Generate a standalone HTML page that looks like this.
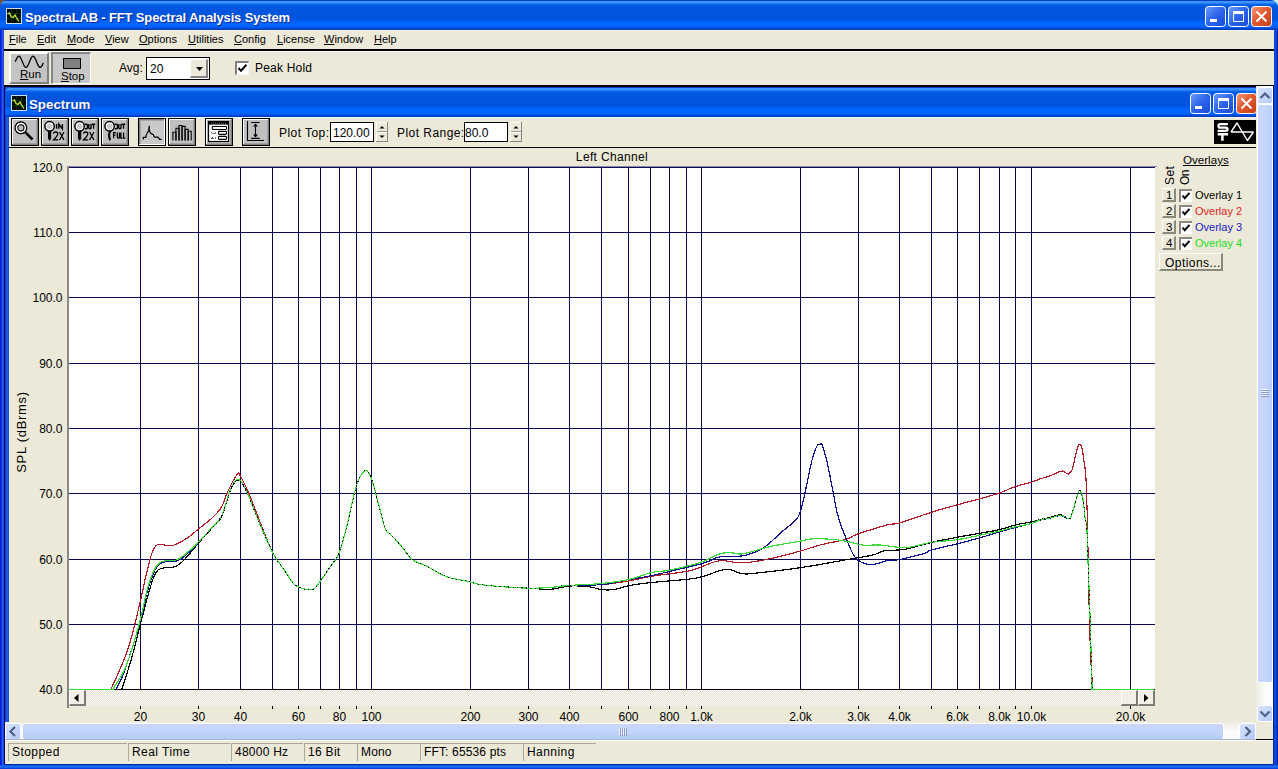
<!DOCTYPE html>
<html><head><meta charset="utf-8"><style>
*{margin:0;padding:0;box-sizing:border-box}
body{-webkit-font-smoothing:antialiased;width:1278px;height:769px;overflow:hidden;position:relative;background:#ECE9D8;font-family:"Liberation Sans",sans-serif;font-size:12px;color:#000}
.a{position:absolute}
.t{position:absolute;white-space:pre;line-height:1;letter-spacing:0.45px}
.tb{background:linear-gradient(to bottom,#0a3fc4 0,#0a3fc4 1px,#3c95ff 1px,#3893ff 3px,#0b67ec 4px,#0258e2 6px,#0055de 12px,#0053dc 18px,#0059ea 20px,#0064fc 22px,#0066ff 26px,#0055e6 28px,#003ec0 29px,#003ec0 30px)}
.u{text-decoration:underline}
.m{font-size:11px;top:34px;letter-spacing:0}
.sb{background:linear-gradient(to right,#cbd9fd,#b9ccfa)}
.btn{position:absolute;width:28px;height:28px;border:1px solid #000;background:#c0c0c0;box-shadow:inset 1px 1px 0 #fff,inset -1px -1px 0 #808080}
.btn.p{background:#c8c8c8;box-shadow:inset 1px 1px 0 #808080,inset -1px -1px 0 #fff}
.spin{position:absolute;width:12px;height:20px;background:#ECE9D8;border-left:1px solid #fff;border-top:1px solid #fff;border-right:1px solid #808080;border-bottom:1px solid #808080}
.pane{position:absolute;top:743px;height:18px;border-left:1px solid #aca899;border-top:1px solid #aca899}
</style></head><body>

<!-- outer frame -->
<div class="a" style="left:0;top:0;width:8px;height:8px;background:#6a5040"></div><div class="a" style="left:1270px;top:0;width:8px;height:8px;background:#d4f2f0"></div>
<div class="a" style="left:0;top:29px;width:4px;height:740px;background:linear-gradient(to right,#0018d8,#0a28dc 30%,#2a5ef0 60%,#1a40c0)"></div>
<div class="a" style="left:1274px;top:29px;width:4px;height:740px;background:linear-gradient(to right,#0b4ad8,#0d46d4 50%,#0020a0)"></div>
<div class="a" style="left:1275px;top:6px;width:3px;height:23px;background:linear-gradient(to right,rgba(0,40,180,0.3),#0020a0)"></div>
<div class="a" style="left:0;top:765px;width:1278px;height:4px;background:linear-gradient(to bottom,#0b55e0,#1e6ff5 50%,#0831d9)"></div>
<div class="a" style="left:4px;top:764px;width:1270px;height:1px;background:#002a9c"></div>
<div class="a" style="left:4px;top:86px;width:1px;height:678px;background:#000070"></div>
<div class="a" style="left:1273px;top:86px;width:1px;height:678px;background:#00229a"></div>

<!-- main title bar -->
<div class="a tb" style="left:0;top:0;width:1278px;height:30px;border-radius:7px 7px 0 0"></div>
<div class="a" style="left:4px;top:30px;width:1270px;height:1px;background:#f2f6ff"></div>
<svg class="a" style="left:6px;top:8px" width="16" height="16" viewBox="0 0 16 16">
<rect x="0.5" y="0.5" width="15" height="15" fill="#050a05" stroke="#c8dcf4"/>
<path d="M1,5.5H15M1,10.5H15M5.5,1V15M10.5,1V15" stroke="#083010" stroke-width="1"/>
<path d="M1.5,6 L3.5,5 L5,8.5 L7,9.5 L9,7 L10,9 L13,13.5" fill="none" stroke="#c8e838" stroke-width="1.3"/>
</svg>
<div class="t" style="left:25px;top:11px;color:#fff;text-shadow:1px 1px 0 #0a2a9a;font-weight:bold;font-size:13px;letter-spacing:-0.15px">SpectraLAB - FFT Spectral Analysis System</div>
<svg class="a" style="left:1205px;top:6px" width="67" height="21" viewBox="0 0 67 21"><defs><linearGradient id="bg1205" x1="0" y1="0" x2="1" y2="1"><stop offset="0" stop-color="#6f9df9"/><stop offset="0.5" stop-color="#2c64ec"/><stop offset="1" stop-color="#1a4bd8"/></linearGradient>
<linearGradient id="rg1205" x1="0" y1="0" x2="1" y2="1"><stop offset="0" stop-color="#f0a07e"/><stop offset="0.45" stop-color="#e35a30"/><stop offset="1" stop-color="#c23d18"/></linearGradient></defs>
<rect x="0.5" y="0.5" width="20" height="20" rx="3" fill="url(#bg1205)" stroke="#fff"/>
<rect x="5" y="13" width="7" height="3" fill="#fff"/>
<rect x="23.5" y="0.5" width="20" height="20" rx="3" fill="url(#bg1205)" stroke="#fff"/>
<path d="M28.5,6.5H38.5V15.5H28.5Z" fill="none" stroke="#fff"/><rect x="28" y="5" width="11" height="3" fill="#fff"/>
<rect x="46.5" y="0.5" width="20" height="20" rx="3" fill="url(#rg1205)" stroke="#fff"/>
<path d="M51.5,5.5L61.5,15.5M61.5,5.5L51.5,15.5" stroke="#fff" stroke-width="2"/>
</svg>

<!-- menu bar -->
<div class="a" style="left:4px;top:49px;width:1270px;height:2px;background:#000"></div>
<div class="t m" style="left:9px"><span class="u">F</span>ile</div>
<div class="t m" style="left:37px"><span class="u">E</span>dit</div>
<div class="t m" style="left:67px"><span class="u">M</span>ode</div>
<div class="t m" style="left:105px"><span class="u">V</span>iew</div>
<div class="t m" style="left:139px"><span class="u">O</span>ptions</div>
<div class="t m" style="left:188px"><span class="u">U</span>tilities</div>
<div class="t m" style="left:234px"><span class="u">C</span>onfig</div>
<div class="t m" style="left:277px"><span class="u">L</span>icense</div>
<div class="t m" style="left:324px"><span class="u">W</span>indow</div>
<div class="t m" style="left:374px"><span class="u">H</span>elp</div>

<!-- main toolbar -->
<div class="a" style="left:5px;top:51px;width:1268px;height:1px;background:#fff"></div>
<div class="a" style="left:4px;top:85px;width:1270px;height:2px;background:#000"></div>
<!-- Run -->
<div class="a" style="left:9px;top:52px;width:40px;height:32px;background:#c4c4c4;border-left:2px solid #fff;border-top:2px solid #fff;border-right:2px solid #7f7f7f;border-bottom:2px solid #7f7f7f"></div>
<svg class="a" style="left:14px;top:55px" width="31" height="14" viewBox="0 0 31 14"><path d="M1.3,6.8 L2.0,5.1 L2.7,3.5 L3.4,2.3 L4.1,1.5 L4.8,1.2 L5.5,1.4 L6.2,2.2 L6.9,3.4 L7.6,4.9 L8.3,6.6 L9.0,8.3 L9.7,9.8 L10.4,11.1 L11.1,12.0 L11.8,12.4 L12.5,12.2 L13.2,11.6 L13.9,10.4 L14.6,9.0 L15.3,7.3 L16.0,5.6 L16.7,4.0 L17.4,2.6 L18.1,1.7 L18.8,1.2 L19.5,1.3 L20.2,1.9 L20.9,3.0 L21.6,4.4 L22.3,6.1 L23.0,7.8 L23.7,9.4 L24.4,10.8 L25.1,11.8 L25.8,12.3 L26.5,12.3 L27.2,11.8 L27.9,10.8 L28.6,9.4 L29.3,7.8" fill="none" stroke="#000" stroke-width="1.3"/></svg>
<div class="t" style="left:20px;top:69px;font-size:11.5px;letter-spacing:0"><span class="u">R</span>un</div>
<!-- Stop -->
<div class="a" style="left:51px;top:52px;width:40px;height:32px;background:#c8c8c8;border-left:2px solid #888;border-top:2px solid #888;border-right:1px solid #fff;border-bottom:1px solid #fff"></div>
<div class="a" style="left:63px;top:58px;width:18px;height:11px;background:#808080;border:1px solid #000"></div>
<div class="t" style="left:61px;top:71px;font-size:11.5px;letter-spacing:0"><span class="u">S</span>top</div>
<!-- Avg -->
<div class="t" style="left:119px;top:62px;letter-spacing:0">Avg:</div>
<div class="a" style="left:146px;top:57px;width:64px;height:23px;background:#fff;border:1px solid #000"></div>
<div class="t" style="left:150px;top:63px;letter-spacing:0">20</div>
<div class="a" style="left:190px;top:59px;width:18px;height:19px;background:#ECE9D8;border-left:1px solid #fff;border-top:1px solid #fff;border-right:2px solid #858585;border-bottom:2px solid #858585"></div>
<svg class="a" style="left:196px;top:67px" width="7" height="4"><path d="M0,0H7L3.5,4Z" fill="#000"/></svg>
<!-- Peak hold checkbox -->
<div class="a" style="left:235px;top:61px;width:14px;height:14px;background:#fff;border-left:2px solid #808080;border-top:2px solid #808080;border-right:1px solid #f4f4f4;border-bottom:1px solid #f4f4f4"></div>
<svg class="a" style="left:238px;top:64px" width="9" height="9" viewBox="0 0 9 9"><path d="M0.5,4 L3,6.8 L8.5,0.8" fill="none" stroke="#000" stroke-width="2"/></svg>
<div class="t" style="left:255px;top:62px;letter-spacing:0.2px">Peak Hold</div>

<!-- MDI child -->
<div class="a" style="left:5px;top:87px;width:4px;height:635px;background:linear-gradient(to right,#0030b0,#1e5ae8 40%,#1e5ae8 70%,#1848a8)"></div>
<div class="a" style="left:9px;top:118px;width:1px;height:604px;background:#e4f0ff"></div>
<div class="a tb" style="left:5px;top:87px;width:1251px;height:30px;border-radius:6px 0 0 0"></div>
<div class="a" style="left:9px;top:117px;width:1247px;height:1px;background:#f2f6ff"></div>
<svg class="a" style="left:11px;top:95px" width="16" height="16" viewBox="0 0 16 16">
<rect x="0.5" y="0.5" width="15" height="15" fill="#050a05" stroke="#c8dcf4"/>
<path d="M1,5.5H15M1,10.5H15M5.5,1V15M10.5,1V15" stroke="#083010" stroke-width="1"/>
<path d="M1.5,6 L3.5,5 L5,8.5 L7,9.5 L9,7 L10,9 L13,13.5" fill="none" stroke="#c8e838" stroke-width="1.3"/>
</svg>
<div class="t" style="left:29px;top:98px;color:#fff;text-shadow:1px 1px 0 #0a2a9a;font-weight:bold;font-size:13.3px;letter-spacing:0">Spectrum</div>
<svg class="a" style="left:1190px;top:93px" width="67" height="21" viewBox="0 0 67 21"><defs><linearGradient id="bg1190" x1="0" y1="0" x2="1" y2="1"><stop offset="0" stop-color="#6f9df9"/><stop offset="0.5" stop-color="#2c64ec"/><stop offset="1" stop-color="#1a4bd8"/></linearGradient>
<linearGradient id="rg1190" x1="0" y1="0" x2="1" y2="1"><stop offset="0" stop-color="#f0a07e"/><stop offset="0.45" stop-color="#e35a30"/><stop offset="1" stop-color="#c23d18"/></linearGradient></defs>
<rect x="0.5" y="0.5" width="20" height="20" rx="3" fill="url(#bg1190)" stroke="#fff"/>
<rect x="5" y="13" width="7" height="3" fill="#fff"/>
<rect x="23.5" y="0.5" width="20" height="20" rx="3" fill="url(#bg1190)" stroke="#fff"/>
<path d="M28.5,6.5H38.5V15.5H28.5Z" fill="none" stroke="#fff"/><rect x="28" y="5" width="11" height="3" fill="#fff"/>
<rect x="46.5" y="0.5" width="20" height="20" rx="3" fill="url(#rg1190)" stroke="#fff"/>
<path d="M51.5,5.5L61.5,15.5M61.5,5.5L51.5,15.5" stroke="#fff" stroke-width="2"/>
</svg>
<div class="a" style="left:9px;top:147px;width:1247px;height:1px;background:#000"></div>

<svg class="a" style="left:11px;top:118px" width="28" height="28" viewBox="0 0 28 28"><rect x="0" y="0" width="28" height="28" fill="#000"/><rect x="1" y="1" width="26" height="26" fill="#c0c0c0"/><path d="M1,1H27V2H2V27H1Z" fill="#ffffff"/><path d="M27,1V27H1V26H26V1Z" fill="#808080"/><path d="M26,2V26H2V25H25V2Z" fill="#a0a0a0"/><circle cx="9.9" cy="9.8" r="5.8" fill="#c0c0c0" stroke="#000" stroke-width="1.4"/><circle cx="9.9" cy="9.8" r="4.3" fill="none" stroke="#fff" stroke-width="1.6"/><circle cx="9.9" cy="9.8" r="3.0999999999999996" fill="none" stroke="#000" stroke-width="1.1"/><path d="M14.2,14.2L21.5,21.5" stroke="#000" stroke-width="2.6"/></svg>
<svg class="a" style="left:41px;top:118px" width="28" height="28" viewBox="0 0 28 28"><rect x="0" y="0" width="28" height="28" fill="#000"/><rect x="1" y="1" width="26" height="26" fill="#c0c0c0"/><path d="M1,1H27V2H2V27H1Z" fill="#ffffff"/><path d="M27,1V27H1V26H26V1Z" fill="#808080"/><path d="M26,2V26H2V25H25V2Z" fill="#a0a0a0"/><circle cx="8.6" cy="8.3" r="4.7" fill="#fff" stroke="#000" stroke-width="1.5"/><circle cx="8.6" cy="8.3" r="2.9000000000000004" fill="#c8c8c8"/><path d="M7,13H10.2V20.5L8.6,23L7,20.5Z" fill="#000"/><path d="M15.6,6V10.8M17.8,10.8V6L21.4,10.8V6" fill="none" stroke="#000" stroke-width="1.4"/><path d="M12.3,15.6Q12.8,14 14.8,14Q16.8,14 16.8,16Q16.8,17.6 12.6,21.8H17.3M18.6,14L23,22M23,14L18.6,22" fill="none" stroke="#000" stroke-width="1.3"/></svg>
<svg class="a" style="left:71px;top:118px" width="28" height="28" viewBox="0 0 28 28"><rect x="0" y="0" width="28" height="28" fill="#000"/><rect x="1" y="1" width="26" height="26" fill="#c0c0c0"/><path d="M1,1H27V2H2V27H1Z" fill="#ffffff"/><path d="M27,1V27H1V26H26V1Z" fill="#808080"/><path d="M26,2V26H2V25H25V2Z" fill="#a0a0a0"/><circle cx="8.6" cy="8.3" r="4.7" fill="#fff" stroke="#000" stroke-width="1.5"/><circle cx="8.6" cy="8.3" r="2.9000000000000004" fill="#c8c8c8"/><path d="M7,13H10.2V20.5L8.6,23L7,20.5Z" fill="#000"/><path d="M13.8,6.3H15.2Q16.6,6.3 16.6,8.5Q16.6,10.7 15.2,10.7H13.8M17.8,6V9.8Q17.8,10.8 18.8,10.8Q20,10.8 20,9.8V6M20.8,6.3H24.3M22.55,6.3V10.8" fill="none" stroke="#000" stroke-width="1.4"/><path d="M12.3,15.6Q12.8,14 14.8,14Q16.8,14 16.8,16Q16.8,17.6 12.6,21.8H17.3M18.6,14L23,22M23,14L18.6,22" fill="none" stroke="#000" stroke-width="1.3"/></svg>
<svg class="a" style="left:101px;top:118px" width="28" height="28" viewBox="0 0 28 28"><rect x="0" y="0" width="28" height="28" fill="#000"/><rect x="1" y="1" width="26" height="26" fill="#c0c0c0"/><path d="M1,1H27V2H2V27H1Z" fill="#ffffff"/><path d="M27,1V27H1V26H26V1Z" fill="#808080"/><path d="M26,2V26H2V25H25V2Z" fill="#a0a0a0"/><circle cx="8.6" cy="8.3" r="4.7" fill="#fff" stroke="#000" stroke-width="1.5"/><circle cx="8.6" cy="8.3" r="2.9000000000000004" fill="#c8c8c8"/><path d="M8.2,13 Q6.3,16 7.2,19.5 L8.3,22.8 L10,21.8 L9.2,18.2 Q8.8,15.8 10.4,13Z" fill="#000"/><path d="M13.8,6.3H15.2Q16.6,6.3 16.6,8.5Q16.6,10.7 15.2,10.7H13.8M17.8,6V9.8Q17.8,10.8 18.8,10.8Q20,10.8 20,9.8V6M20.8,6.3H24.3M22.55,6.3V10.8" fill="none" stroke="#000" stroke-width="1.4"/><path d="M12.6,20.2V14.6H15M12.6,17.2H14.6M16.4,14.5V19.3Q16.4,20.2 17.4,20.2Q18.5,20.2 18.5,19.3V14.5M19.9,14.5V20.2H21.6M22.6,14.5V20.2H24.4" fill="none" stroke="#000" stroke-width="1.3"/></svg>
<svg class="a" style="left:138px;top:118px" width="28" height="28" viewBox="0 0 28 28"><rect x="0" y="0" width="28" height="28" fill="#000"/><rect x="1" y="1" width="26" height="26" fill="#c9c9c9"/><path d="M1,1H27V2H2V27H1Z" fill="#808080"/><path d="M27,1V27H1V26H26V1Z" fill="#ffffff"/><path d="M2,2H26V3H3V26H2Z" fill="#a8a8a8"/><path d="M5.3,21.5V19.4H8V17.8L9.4,14.5L10.6,13.1L11.3,7.8V12.6L12.7,15.4L15.3,16.8L16.4,19.2H20L21.6,21.3H23.5" fill="none" stroke="#000" stroke-width="1.2"/></svg>
<svg class="a" style="left:168px;top:118px" width="28" height="28" viewBox="0 0 28 28"><rect x="0" y="0" width="28" height="28" fill="#000"/><rect x="1" y="1" width="26" height="26" fill="#c0c0c0"/><path d="M1,1H27V2H2V27H1Z" fill="#ffffff"/><path d="M27,1V27H1V26H26V1Z" fill="#808080"/><path d="M26,2V26H2V25H25V2Z" fill="#a0a0a0"/><path d="M4.90,22.5V14.3H7.95V22.5" fill="none" stroke="#000" stroke-width="1.1"/><path d="M7.95,22.5V10.3H11.00V22.5" fill="none" stroke="#000" stroke-width="1.1"/><path d="M11.00,22.5V7.5H14.05V22.5" fill="none" stroke="#000" stroke-width="1.1"/><path d="M14.05,22.5V8.4H17.10V22.5" fill="none" stroke="#000" stroke-width="1.1"/><path d="M17.10,22.5V11.4H20.15V22.5" fill="none" stroke="#000" stroke-width="1.1"/><path d="M20.15,22.5V13.3H23.20V22.5" fill="none" stroke="#000" stroke-width="1.1"/></svg>
<svg class="a" style="left:205px;top:118px" width="28" height="28" viewBox="0 0 28 28"><rect x="0" y="0" width="28" height="28" fill="#000"/><rect x="1" y="1" width="26" height="26" fill="#c0c0c0"/><path d="M1,1H27V2H2V27H1Z" fill="#ffffff"/><path d="M27,1V27H1V26H26V1Z" fill="#808080"/><path d="M26,2V26H2V25H25V2Z" fill="#a0a0a0"/><rect x="3.5" y="3.5" width="20" height="20" fill="#fff" stroke="#000" stroke-width="1.2"/><rect x="4" y="4" width="19" height="2.6" fill="#000"/><path d="M6,5.3H21" stroke="#888" stroke-width="0.8" stroke-dasharray="1,1"/><rect x="7.3" y="8.5" width="14.2" height="3" rx="0.8" fill="#fff" stroke="#000" stroke-width="1.1"/><rect x="13.5" y="13.4" width="8" height="3" rx="0.8" fill="#fff" stroke="#000" stroke-width="1.1"/><rect x="13.5" y="18.4" width="8" height="3" rx="0.8" fill="#fff" stroke="#000" stroke-width="1.1"/><path d="M6.3,14.5L7.5,15.5M8.5,15.5H9.5M10.5,14.5V15.5M6.3,20.5L7.5,19.5L8.5,20.5M10.5,19.5V20.5" stroke="#000" stroke-width="1"/></svg>
<svg class="a" style="left:242px;top:118px" width="28" height="28" viewBox="0 0 28 28"><rect x="0" y="0" width="28" height="28" fill="#000"/><rect x="1" y="1" width="26" height="26" fill="#c0c0c0"/><path d="M1,1H27V2H2V27H1Z" fill="#ffffff"/><path d="M27,1V27H1V26H26V1Z" fill="#808080"/><path d="M26,2V26H2V25H25V2Z" fill="#a0a0a0"/><path d="M5.5,3V22.5H22" fill="none" stroke="#000" stroke-width="1.1"/><path d="M9.2,4.5H17.7M9.2,20.4H17.7M13.5,6V19" stroke="#000" stroke-width="1.1"/><path d="M11,8.5L13.5,5.5L16,8.5ZM11,16.5L13.5,19.5L16,16.5Z" fill="#000"/></svg>
<div class="t" style="left:279px;top:127px">Plot Top:</div>
<div class="a" style="left:330px;top:122px;width:44px;height:20px;background:#fff;border:1px solid #000"></div>
<div class="t" style="left:333px;top:127px;letter-spacing:0">120.00</div>
<svg class="a" style="left:376px;top:122px" width="12" height="20" viewBox="0 0 12 20">
<rect x="0" y="0" width="12" height="20" fill="#ece9d8"/>
<path d="M0,0H11V1H1V20H0Z" fill="#fff"/><path d="M11,0H12V20H0V19H11Z" fill="#858585"/>
<rect x="1" y="9" width="10" height="1" fill="#9a9a8a"/><rect x="1" y="10" width="10" height="1" fill="#fff"/>
<path d="M3.5,6.5H8.5L6,4Z" fill="#000"/><path d="M3.5,13.5H8.5L6,16Z" fill="#000"/></svg>
<div class="t" style="left:397px;top:127px">Plot Range:</div>
<div class="a" style="left:464px;top:122px;width:44px;height:20px;background:#fff;border:1px solid #000"></div>
<div class="t" style="left:465px;top:127px;letter-spacing:0">80.0</div>
<svg class="a" style="left:510px;top:122px" width="12" height="20" viewBox="0 0 12 20">
<rect x="0" y="0" width="12" height="20" fill="#ece9d8"/>
<path d="M0,0H11V1H1V20H0Z" fill="#fff"/><path d="M11,0H12V20H0V19H11Z" fill="#858585"/>
<rect x="1" y="9" width="10" height="1" fill="#9a9a8a"/><rect x="1" y="10" width="10" height="1" fill="#fff"/>
<path d="M3.5,6.5H8.5L6,4Z" fill="#000"/><path d="M3.5,13.5H8.5L6,16Z" fill="#000"/></svg>
<svg class="a" style="left:1214px;top:120px" width="42" height="24" viewBox="0 0 42 24">
<rect width="42" height="24" fill="#000"/>
<path d="M13.8,4.2H6.2Q4.5,4.2 4.5,5.9Q4.5,7.6 6.2,7.6H11.8Q13.5,7.6 13.5,9.2Q13.5,10.8 11.8,10.8H3.6" fill="none" stroke="#fff" stroke-width="2.3"/>
<path d="M3.7,14.3H14.1M8.4,14.3V20.8" stroke="#fff" stroke-width="2.5"/>
<path d="M17,12H39.5M17,12L23,3L33.4,20.5L39.5,12" fill="none" stroke="#fff" stroke-width="1.4" stroke-linejoin="round"/>
</svg>

<svg class="a" style="left:0;top:0" width="1278" height="769" viewBox="0 0 1278 769" font-family="Liberation Sans" font-size="12">
<rect x="69" y="168" width="1086" height="522" fill="#fff"/>
<rect x="68" y="166" width="1089" height="1" fill="#8c8aa8"/>
<rect x="67" y="166" width="2" height="524" fill="#8a8a8a"/>
<rect x="140" y="167" width="1" height="522" fill="#0a0850"/>
<rect x="198" y="167" width="1" height="522" fill="#0a0850"/>
<rect x="240" y="167" width="1" height="522" fill="#0a0850"/>
<rect x="272" y="167" width="1" height="522" fill="#0a0850"/>
<rect x="298" y="167" width="1" height="522" fill="#0a0850"/>
<rect x="320" y="167" width="1" height="522" fill="#0a0850"/>
<rect x="339" y="167" width="1" height="522" fill="#0a0850"/>
<rect x="356" y="167" width="1" height="522" fill="#0a0850"/>
<rect x="371" y="167" width="1" height="522" fill="#0a0850"/>
<rect x="470" y="167" width="1" height="522" fill="#0a0850"/>
<rect x="528" y="167" width="1" height="522" fill="#0a0850"/>
<rect x="569" y="167" width="1" height="522" fill="#0a0850"/>
<rect x="601" y="167" width="1" height="522" fill="#0a0850"/>
<rect x="628" y="167" width="1" height="522" fill="#0a0850"/>
<rect x="650" y="167" width="1" height="522" fill="#0a0850"/>
<rect x="669" y="167" width="1" height="522" fill="#0a0850"/>
<rect x="686" y="167" width="1" height="522" fill="#0a0850"/>
<rect x="701" y="167" width="1" height="522" fill="#0a0850"/>
<rect x="800" y="167" width="1" height="522" fill="#0a0850"/>
<rect x="858" y="167" width="1" height="522" fill="#0a0850"/>
<rect x="899" y="167" width="1" height="522" fill="#0a0850"/>
<rect x="931" y="167" width="1" height="522" fill="#0a0850"/>
<rect x="957" y="167" width="1" height="522" fill="#0a0850"/>
<rect x="979" y="167" width="1" height="522" fill="#0a0850"/>
<rect x="999" y="167" width="1" height="522" fill="#0a0850"/>
<rect x="1015" y="167" width="1" height="522" fill="#0a0850"/>
<rect x="1031" y="167" width="1" height="522" fill="#0a0850"/>
<rect x="1130" y="167" width="1" height="522" fill="#0a0850"/>
<rect x="69" y="167" width="1086" height="1" fill="#0a0850"/>
<rect x="69" y="232" width="1086" height="1" fill="#0a0850"/>
<rect x="69" y="297" width="1086" height="1" fill="#0a0850"/>
<rect x="69" y="363" width="1086" height="1" fill="#0a0850"/>
<rect x="69" y="428" width="1086" height="1" fill="#0a0850"/>
<rect x="69" y="493" width="1086" height="1" fill="#0a0850"/>
<rect x="69" y="559" width="1086" height="1" fill="#0a0850"/>
<rect x="69" y="624" width="1086" height="1" fill="#0a0850"/>
<rect x="69" y="167" width="1086" height="1" fill="#10105a"/>
<rect x="69" y="689" width="1086" height="1" fill="#000"/>
<text x="62.5" y="171.5" text-anchor="end">120.0</text>
<text x="62.5" y="236.5" text-anchor="end">110.0</text>
<text x="62.5" y="301.5" text-anchor="end">100.0</text>
<text x="62.5" y="367.5" text-anchor="end">90.0</text>
<text x="62.5" y="432.5" text-anchor="end">80.0</text>
<text x="62.5" y="497.5" text-anchor="end">70.0</text>
<text x="62.5" y="563.5" text-anchor="end">60.0</text>
<text x="62.5" y="628.5" text-anchor="end">50.0</text>
<text x="62.5" y="693.5" text-anchor="end">40.0</text>
<g fill="none" stroke-width="1.2" stroke-linejoin="round" shape-rendering="crispEdges">
<path d="M121.8,689.3 L123.5,684.1 L125.9,676.7 L128.6,668.1 L131.2,659.6 L133.6,650.9 L135.9,641.7 L138.3,632.5 L140.5,623.8 L142.6,615.8 L144.5,608.1 L146.4,600.8 L148.3,594.1 L150.2,587.7 L152.1,581.6 L154.0,576.4 L156.1,572.3 L158.3,569.8 L160.7,568.6 L163.1,568.1 L165.5,567.6 L167.9,567.2 L170.2,567.3 L172.6,567.3 L174.9,566.7 L177.1,565.6 L179.2,564.3 L181.5,562.4 L184.2,559.8 L187.5,556.2 L191.3,551.8 L195.2,547.1 L198.9,542.7 L202.4,538.7 L205.9,534.8 L209.3,531.0 L212.3,527.6 L214.9,525.0 L217.2,522.9 L219.4,520.4 L221.6,516.6 L224.0,510.3 L226.4,502.5 L228.8,494.6 L231.0,488.6 L233.0,484.6 L235.0,481.8 L236.8,480.2 L238.8,480.0 L240.8,481.4 L242.9,484.2 L245.0,488.1 L247.3,492.8 L249.8,498.5 L252.4,505.2 L255.2,512.6 L258.2,520.1 L261.7,528.3 L265.5,537.1 L269.3,545.6 L272.8,552.8 L275.8,558.1 L278.5,562.1 L281.1,565.6 L283.7,569.2 L286.3,573.2 L288.9,577.2 L291.3,580.9 L293.7,583.8 L295.9,585.7 L298.0,586.9 L300.0,587.6 L301.9,588.3 L303.8,588.9 L305.7,589.3 L307.5,589.5 L309.2,589.6 L310.7,589.6 L312.0,589.5 L313.2,589.2 L314.6,588.3 L316.0,586.9 L317.5,585.0 L319.1,582.8 L321.0,580.1 L323.3,576.9 L325.9,573.1 L328.5,569.3 L331.0,565.6 L333.2,562.7 L335.2,560.1 L337.2,557.1 L339.2,552.8 L341.2,546.9 L343.2,539.8 L345.3,532.0 L347.4,523.7 L349.6,514.2 L351.9,503.7 L354.3,493.6 L356.5,485.5 L358.7,479.7 L360.8,475.4 L362.9,472.4 L364.7,470.6 L366.3,470.2 L367.6,471.3 L368.9,473.2 L370.1,475.5 L371.2,477.7 L372.1,480.2 L373.2,483.8 L374.7,489.1 L376.9,497.7 L379.7,508.6 L382.4,519.4 L384.7,527.3 L386.2,531.0 L387.3,532.2 L388.4,532.5 L390.0,533.8 L392.4,536.4 L395.3,539.4 L398.3,542.7 L401.3,546.0 L404.0,549.5 L406.7,553.2 L409.4,556.7 L412.5,559.7 L415.9,561.8 L419.6,563.4 L423.5,564.8 L427.6,566.6 L431.9,569.0 L436.5,571.7 L441.3,574.4 L446.3,576.6 L451.9,578.3 L458.1,579.5 L464.0,580.6 L468.9,581.6 L472.2,582.5 L474.5,583.2 L476.8,583.9 L480.1,584.5 L484.9,585.1 L490.5,585.7 L496.5,586.2 L502.7,586.7 L509.1,587.1 L515.9,587.5 L522.6,587.9 L529.0,588.2 L535.0,588.6 L540.8,589.0 L546.3,589.3 L551.5,589.2 L556.2,588.6 L560.6,587.6 L564.8,586.6 L569.3,586.0 L574.2,585.8 L579.4,586.0 L584.5,586.3 L589.0,586.7 L592.8,587.4 L596.0,588.3 L599.1,589.1 L602.2,589.7 L605.5,589.9 L608.7,589.9 L612.0,589.6 L615.4,589.2 L618.8,588.5 L622.2,587.4 L625.9,586.4 L630.0,585.4 L634.5,584.6 L639.2,584.0 L644.6,583.3 L650.9,582.6 L659.0,581.8 L668.4,581.0 L677.7,580.2 L685.3,579.5 L690.5,578.9 L694.1,578.5 L697.3,577.9 L701.0,577.0 L705.7,575.6 L710.8,573.8 L715.7,572.0 L719.8,570.7 L722.7,569.9 L724.8,569.4 L726.7,569.3 L729.2,569.5 L732.3,570.3 L735.8,571.6 L739.4,573.0 L743.3,573.8 L746.8,574.0 L750.2,573.8 L754.5,573.3 L760.5,572.6 L768.7,571.7 L778.7,570.6 L789.6,569.2 L801.0,567.6 L813.6,565.6 L827.5,563.1 L840.8,560.7 L851.7,558.8 L859.4,557.5 L864.9,556.6 L869.2,555.8 L873.2,554.9 L876.6,553.8 L879.2,552.6 L881.7,551.5 L884.9,550.6 L889.1,550.2 L893.7,550.2 L898.8,550.0 L904.4,549.4 L910.6,548.0 L917.5,546.1 L924.5,544.2 L931.4,542.4 L938.1,540.9 L944.9,539.6 L951.5,538.4 L957.7,537.2 L963.5,536.1 L969.0,535.2 L974.3,534.2 L979.5,533.3 L984.7,532.4 L989.8,531.6 L994.7,530.7 L999.4,529.7 L1003.7,528.5 L1007.7,527.3 L1011.6,526.0 L1015.5,524.9 L1019.7,524.0 L1024.0,523.2 L1028.0,522.6 L1031.5,521.9 L1034.2,521.3 L1036.3,520.6 L1038.2,520.1 L1040.4,519.5 L1042.9,518.9 L1045.5,518.4 L1048.2,517.9 L1050.8,517.3 L1053.3,516.5 L1055.8,515.7 L1058.3,515.0 L1060.6,514.8 L1062.9,515.5 L1065.3,516.9 L1067.4,518.2 L1069.0,518.8 L1070.0,518.5 L1070.5,517.8 L1070.9,516.6 L1071.4,515.0 L1072.2,512.9 L1073.0,510.3 L1073.9,507.6 L1074.6,505.2 L1075.2,503.2 L1075.7,501.3 L1076.1,499.6 L1076.6,497.9 L1077.1,496.1 L1077.7,494.4 L1078.2,492.8 L1078.7,491.6 L1079.1,490.8 L1079.4,490.3 L1079.7,490.1 L1080.0,490.3 L1080.4,491.0 L1080.9,492.1 L1081.4,493.5 L1081.8,494.8 L1082.2,496.1 L1082.5,497.4 L1082.8,498.9 L1083.1,500.5 L1083.4,502.3 L1083.7,504.3 L1083.9,506.5 L1084.2,508.8 L1084.5,511.5 L1084.7,514.6 L1085.0,517.5 L1085.3,520.0 L1085.6,521.3 L1086.0,521.7 L1086.4,522.8 L1086.7,525.7 L1087.0,530.4 L1087.2,536.3 L1087.4,544.2 L1087.8,554.8 L1088.3,569.4 L1089.0,587.2 L1089.7,606.1 L1090.3,624.0 L1090.8,642.1 L1091.4,660.8 L1091.8,677.4 L1092.1,689.0" stroke="#000"/>
<path d="M110.9,689.3 L112.2,686.5 L114.1,682.5 L116.3,677.6 L118.7,672.1 L121.2,666.2 L124.0,659.7 L126.8,652.4 L129.6,644.0 L132.4,633.8 L135.3,622.2 L138.1,610.6 L140.5,600.4 L142.4,592.1 L143.9,585.0 L145.3,578.5 L146.8,572.3 L148.4,566.0 L149.9,560.0 L151.4,554.7 L153.0,550.5 L154.4,547.6 L155.8,545.9 L157.3,544.9 L159.3,544.2 L161.9,544.3 L164.9,545.1 L168.2,545.9 L171.7,545.8 L175.5,544.5 L179.5,542.6 L183.6,540.3 L187.3,538.0 L190.4,535.8 L193.2,533.5 L196.0,531.1 L198.9,528.6 L202.2,526.0 L205.7,523.2 L209.2,520.5 L212.3,517.7 L215.0,515.1 L217.4,512.5 L219.6,509.9 L221.6,506.8 L223.3,503.3 L224.8,499.4 L226.2,495.3 L227.9,491.2 L230.2,486.6 L232.8,481.5 L235.3,477.0 L237.2,474.0 L238.2,472.7 L238.7,472.6 L239.1,473.6 L240.0,475.5 L241.6,478.2 L243.5,481.9 L245.8,486.5 L248.2,491.9 L250.9,498.4 L253.8,506.0 L256.9,514.0 L260.0,521.9 L263.2,529.9 L266.5,538.2 L269.7,546.1 L272.8,552.8 L275.7,558.0 L278.4,562.0 L281.1,565.6 L283.7,569.2 L286.3,573.2 L288.9,577.2 L291.3,580.9 L293.7,583.8 L295.9,585.7 L298.0,586.9 L300.0,587.6 L301.9,588.3 L303.8,588.9 L305.7,589.3 L307.5,589.5 L309.2,589.6 L310.7,589.6 L312.0,589.5 L313.2,589.2 L314.6,588.3 L316.0,586.9 L317.5,585.0 L319.1,582.8 L321.0,580.1 L323.3,576.9 L325.9,573.1 L328.5,569.3 L331.0,565.6 L333.2,562.7 L335.2,560.1 L337.2,557.1 L339.2,552.8 L341.2,546.9 L343.2,539.8 L345.3,532.0 L347.4,523.7 L349.6,514.2 L351.9,503.7 L354.3,493.6 L356.5,485.5 L358.7,479.7 L360.8,475.4 L362.9,472.4 L364.7,470.6 L366.3,470.2 L367.6,471.3 L368.9,473.2 L370.1,475.5 L371.2,477.7 L372.1,480.2 L373.2,483.8 L374.7,489.1 L376.9,497.7 L379.7,508.6 L382.4,519.4 L384.7,527.3 L386.2,531.0 L387.3,532.2 L388.4,532.5 L390.0,533.8 L392.4,536.4 L395.3,539.4 L398.3,542.7 L401.3,546.0 L404.0,549.5 L406.7,553.2 L409.4,556.7 L412.5,559.7 L415.9,561.8 L419.6,563.4 L423.5,564.8 L427.6,566.6 L431.9,569.0 L436.5,571.7 L441.3,574.4 L446.3,576.6 L451.9,578.3 L458.1,579.5 L464.0,580.6 L468.9,581.6 L472.2,582.5 L474.5,583.2 L476.8,583.9 L480.1,584.5 L484.9,585.1 L490.5,585.7 L496.5,586.2 L502.7,586.7 L509.1,587.2 L515.9,587.6 L522.6,588.0 L529.0,588.2 L535.0,588.2 L540.8,588.0 L546.3,587.7 L551.5,587.3 L555.9,586.9 L559.8,586.3 L563.9,585.8 L569.3,585.4 L576.6,585.2 L585.1,585.1 L594.0,584.9 L602.2,584.5 L609.7,583.8 L616.9,582.8 L623.7,581.8 L630.0,580.7 L635.4,579.6 L640.0,578.6 L644.9,577.4 L650.9,576.3 L659.0,575.1 L668.4,574.0 L677.7,572.8 L685.3,571.6 L690.5,570.5 L694.1,569.4 L697.3,568.3 L701.0,567.0 L705.4,565.3 L710.0,563.4 L714.8,561.7 L719.8,560.7 L724.9,560.8 L730.3,561.6 L735.8,562.6 L741.7,562.9 L747.9,562.5 L754.4,561.6 L761.2,560.5 L768.3,559.1 L776.0,557.4 L784.3,555.4 L792.4,553.2 L799.6,551.3 L805.3,549.6 L810.1,548.0 L814.8,546.5 L820.0,545.0 L826.4,543.5 L833.5,542.1 L840.3,540.7 L845.9,539.3 L849.4,538.1 L851.5,536.9 L853.7,535.7 L857.5,534.1 L864.0,531.9 L872.1,529.4 L880.2,526.9 L886.8,525.0 L890.7,524.2 L893.0,524.0 L895.4,523.9 L899.5,522.9 L906.3,520.8 L914.6,517.9 L923.4,514.9 L931.4,512.3 L938.5,510.1 L945.2,508.2 L951.6,506.4 L957.7,504.7 L963.5,503.1 L969.0,501.7 L974.3,500.3 L979.5,498.9 L984.7,497.4 L989.8,496.0 L994.7,494.5 L999.4,493.0 L1003.7,491.4 L1007.8,489.6 L1011.7,487.9 L1015.5,486.5 L1019.3,485.4 L1023.1,484.4 L1026.7,483.6 L1030.0,482.7 L1032.9,481.7 L1035.5,480.7 L1037.9,479.7 L1040.4,478.8 L1043.0,478.0 L1045.6,477.2 L1048.2,476.4 L1050.8,475.5 L1053.5,474.4 L1056.2,473.2 L1058.6,472.1 L1060.6,471.4 L1061.8,471.1 L1062.4,471.0 L1062.9,471.2 L1063.6,471.5 L1064.7,472.1 L1065.9,473.0 L1067.2,473.8 L1068.3,474.0 L1069.3,473.5 L1070.3,472.6 L1071.2,471.4 L1072.0,470.0 L1072.6,468.4 L1073.1,466.5 L1073.6,464.5 L1074.0,462.6 L1074.4,460.8 L1074.8,458.9 L1075.2,457.1 L1075.6,455.3 L1076.0,453.5 L1076.4,451.6 L1076.8,449.9 L1077.2,448.5 L1077.5,447.4 L1077.9,446.5 L1078.2,445.8 L1078.5,445.2 L1078.9,444.8 L1079.2,444.5 L1079.6,444.3 L1080.0,444.4 L1080.4,444.6 L1080.7,445.0 L1081.0,445.6 L1081.4,446.5 L1081.8,447.8 L1082.2,449.5 L1082.6,451.3 L1082.9,453.2 L1083.2,455.1 L1083.4,457.1 L1083.7,459.1 L1083.9,461.0 L1084.2,462.6 L1084.4,463.9 L1084.7,465.6 L1085.0,468.0 L1085.3,470.9 L1085.6,474.1 L1086.0,478.5 L1086.3,485.0 L1086.6,493.7 L1086.9,504.2 L1087.3,516.3 L1087.6,530.0 L1087.9,546.0 L1088.3,564.1 L1088.6,582.6 L1089.0,600.0 L1089.4,616.4 L1089.9,632.6 L1090.3,647.4 L1090.8,660.0 L1091.4,670.1 L1092.0,678.2 L1092.5,684.5 L1092.9,689.0" stroke="#b01a2a"/>
<path d="M116.0,689.3 L117.5,686.5 L119.5,682.7 L122.1,677.4 L125.0,670.0 L128.6,659.3 L132.9,645.8 L137.1,632.1 L140.5,620.5 L142.8,611.7 L144.3,604.5 L145.7,598.2 L147.2,592.0 L149.1,585.7 L151.1,579.7 L153.1,574.3 L155.0,570.0 L156.8,566.9 L158.4,564.9 L160.2,563.5 L162.4,562.4 L165.2,561.8 L168.5,561.7 L171.9,561.8 L174.9,561.4 L177.3,560.7 L179.4,559.8 L181.6,558.5 L184.2,556.5 L187.5,553.6 L191.3,550.0 L195.2,546.1 L198.9,542.2 L202.4,538.4 L205.9,534.4 L209.3,530.6 L212.3,527.1 L214.9,524.5 L217.2,522.4 L219.4,519.9 L221.6,516.1 L224.0,509.8 L226.4,502.0 L228.8,494.1 L231.0,488.1 L233.0,484.0 L235.0,481.1 L236.8,479.5 L238.8,479.3 L240.8,480.8 L242.9,483.8 L245.0,487.9 L247.3,492.8 L249.8,498.5 L252.4,505.2 L255.2,512.6 L258.2,520.1 L261.7,528.3 L265.5,537.1 L269.3,545.6 L272.8,552.8 L275.8,558.1 L278.5,562.1 L281.1,565.6 L283.7,569.2 L286.3,573.2 L288.9,577.2 L291.3,580.9 L293.7,583.8 L295.9,585.7 L298.0,586.9 L300.0,587.6 L301.9,588.3 L303.8,588.9 L305.7,589.3 L307.5,589.5 L309.2,589.6 L310.7,589.6 L312.0,589.5 L313.2,589.2 L314.6,588.3 L316.0,586.9 L317.5,585.0 L319.1,582.8 L321.0,580.1 L323.3,576.9 L325.9,573.1 L328.5,569.3 L331.0,565.6 L333.2,562.7 L335.2,560.1 L337.2,557.1 L339.2,552.8 L341.2,546.9 L343.2,539.8 L345.3,532.0 L347.4,523.7 L349.6,514.2 L351.9,503.7 L354.3,493.6 L356.5,485.5 L358.7,479.7 L360.8,475.4 L362.9,472.4 L364.7,470.6 L366.3,470.2 L367.6,471.3 L368.9,473.2 L370.1,475.5 L371.2,477.7 L372.1,480.2 L373.2,483.8 L374.7,489.1 L376.9,497.7 L379.7,508.6 L382.4,519.4 L384.7,527.3 L386.2,531.0 L387.3,532.2 L388.4,532.5 L390.0,533.8 L392.4,536.4 L395.3,539.4 L398.3,542.7 L401.3,546.0 L404.0,549.5 L406.7,553.2 L409.4,556.7 L412.5,559.7 L415.9,561.8 L419.6,563.4 L423.5,564.8 L427.6,566.6 L431.9,569.0 L436.5,571.7 L441.3,574.4 L446.3,576.6 L451.9,578.3 L458.1,579.5 L464.0,580.6 L468.9,581.6 L472.2,582.5 L474.5,583.2 L476.8,583.9 L480.1,584.5 L484.9,585.1 L490.5,585.7 L496.5,586.2 L502.7,586.7 L509.1,587.2 L515.9,587.6 L522.6,588.0 L529.0,588.2 L535.0,588.2 L540.8,588.0 L546.3,587.7 L551.5,587.3 L555.9,586.9 L559.8,586.3 L563.9,585.8 L569.3,585.4 L576.6,585.2 L585.2,585.1 L594.0,585.0 L602.2,584.5 L609.4,583.5 L616.3,582.2 L622.8,580.8 L629.0,579.5 L634.2,578.7 L638.5,578.0 L643.6,577.2 L650.9,575.7 L662.2,573.2 L676.1,569.9 L690.0,566.6 L701.0,563.8 L707.8,561.6 L712.2,559.7 L715.6,558.1 L719.8,556.9 L725.1,556.4 L730.8,556.4 L736.4,556.4 L741.7,556.0 L746.7,554.9 L751.5,553.5 L756.0,551.8 L760.0,550.0 L763.4,548.0 L766.3,545.9 L768.9,543.6 L771.7,541.2 L774.6,538.6 L777.6,535.9 L780.5,533.2 L783.4,530.5 L786.5,528.0 L789.6,525.5 L792.6,523.1 L795.1,520.7 L796.9,518.6 L798.3,516.6 L799.4,514.3 L800.6,511.0 L801.9,506.4 L803.2,500.9 L804.5,494.8 L805.9,488.5 L807.3,481.7 L808.8,474.4 L810.3,467.2 L811.7,461.2 L813.0,456.4 L814.3,452.3 L815.5,449.1 L816.6,446.6 L817.5,445.1 L818.3,444.4 L819.1,444.2 L819.8,444.2 L820.4,443.9 L821.0,443.6 L821.6,444.0 L822.4,445.6 L823.4,448.6 L824.6,452.7 L826.0,457.6 L827.3,463.2 L828.7,469.8 L830.3,477.4 L831.8,485.2 L833.2,492.4 L834.4,498.7 L835.4,504.5 L836.5,510.1 L838.0,515.9 L839.9,522.1 L842.1,528.4 L844.5,534.6 L846.8,540.2 L849.0,545.3 L851.1,550.2 L853.3,554.4 L855.6,557.8 L858.0,560.2 L860.4,561.8 L862.9,562.9 L865.4,563.7 L867.8,564.3 L870.1,564.5 L872.5,564.5 L875.1,564.2 L877.9,563.5 L880.8,562.6 L883.8,561.5 L886.8,560.7 L889.6,560.4 L892.3,560.3 L895.5,560.2 L899.5,559.6 L905.2,558.4 L912.2,556.7 L919.0,555.0 L924.2,553.5 L926.8,552.5 L927.7,551.8 L928.7,551.0 L931.4,550.0 L936.7,548.6 L943.6,547.0 L951.0,545.3 L957.7,543.7 L963.5,542.2 L969.0,540.8 L974.3,539.3 L979.5,537.9 L984.7,536.4 L989.8,534.9 L994.7,533.4 L999.4,532.0 L1003.7,530.8 L1007.7,529.6 L1011.6,528.5 L1015.5,527.5 L1019.7,526.5 L1024.0,525.5 L1028.0,524.5 L1031.5,523.6 L1034.2,522.6 L1036.3,521.7 L1038.2,520.8 L1040.4,520.0 L1042.9,519.4 L1045.5,518.9 L1048.2,518.5 L1050.8,518.0 L1053.3,517.3 L1055.8,516.4 L1058.3,515.7 L1060.6,515.5 L1062.9,516.1 L1065.3,517.3 L1067.4,518.5 L1069.0,519.0 L1070.0,518.7 L1070.5,517.8 L1070.9,516.6 L1071.4,515.0 L1072.2,512.9 L1073.0,510.3 L1073.9,507.6 L1074.6,505.2 L1075.2,503.2 L1075.7,501.3 L1076.1,499.6 L1076.6,497.9 L1077.1,496.1 L1077.7,494.4 L1078.2,492.8 L1078.7,491.6 L1079.1,490.8 L1079.4,490.3 L1079.7,490.1 L1080.0,490.3 L1080.4,491.0 L1080.9,492.1 L1081.4,493.5 L1081.8,494.8 L1082.2,496.1 L1082.5,497.4 L1082.8,498.9 L1083.1,500.5 L1083.4,502.3 L1083.7,504.3 L1083.9,506.5 L1084.2,508.8 L1084.5,511.5 L1084.7,514.6 L1085.0,517.5 L1085.3,520.0 L1085.6,521.3 L1086.0,521.7 L1086.4,522.8 L1086.7,525.7 L1087.0,530.4 L1087.2,536.3 L1087.4,544.2 L1087.8,554.8 L1088.3,569.4 L1089.0,587.2 L1089.7,606.1 L1090.3,624.0 L1090.8,642.1 L1091.4,660.8 L1091.8,677.4 L1092.1,689.0" stroke="#10108a"/>
<path d="M69,689.5 L113,689.5 L113.0,689.0 L114.9,686.0 L117.7,681.8 L120.8,676.9 L123.4,672.1 L125.5,667.6 L127.3,663.0 L129.0,658.0 L131.0,652.0 L133.3,644.6 L135.8,636.1 L138.3,627.3 L140.5,619.1 L142.3,611.6 L143.8,604.4 L145.2,597.5 L146.8,591.0 L148.6,584.8 L150.6,578.8 L152.6,573.5 L154.6,569.2 L156.4,566.1 L158.2,564.0 L160.1,562.5 L162.4,561.4 L165.3,560.8 L168.6,560.7 L171.9,560.8 L174.9,560.4 L177.3,559.6 L179.4,558.5 L181.6,557.1 L184.2,555.1 L187.5,552.3 L191.3,549.0 L195.2,545.3 L198.9,541.7 L202.4,538.1 L205.9,534.2 L209.3,530.5 L212.3,527.1 L214.9,524.5 L217.2,522.4 L219.4,520.0 L221.6,516.1 L224.0,509.8 L226.4,502.0 L228.8,494.1 L231.0,488.1 L233.0,484.0 L235.0,481.1 L236.8,479.5 L238.8,479.3 L240.8,480.8 L242.9,483.8 L245.0,487.9 L247.3,492.8 L249.8,498.5 L252.4,505.2 L255.2,512.6 L258.2,520.1 L261.7,528.3 L265.5,537.1 L269.3,545.6 L272.8,552.8 L275.8,558.1 L278.5,562.1 L281.1,565.6 L283.7,569.2 L286.3,573.2 L288.9,577.2 L291.3,580.9 L293.7,583.8 L295.9,585.7 L298.0,586.9 L300.0,587.6 L301.9,588.3 L303.8,588.9 L305.7,589.3 L307.5,589.5 L309.2,589.6 L310.7,589.6 L312.0,589.5 L313.2,589.2 L314.6,588.3 L316.0,586.9 L317.5,585.0 L319.1,582.8 L321.0,580.1 L323.3,576.9 L325.9,573.1 L328.5,569.3 L331.0,565.6 L333.2,562.7 L335.2,560.1 L337.2,557.1 L339.2,552.8 L341.2,546.9 L343.2,539.8 L345.3,532.0 L347.4,523.7 L349.6,514.2 L351.9,503.7 L354.3,493.6 L356.5,485.5 L358.7,479.7 L360.8,475.4 L362.9,472.4 L364.7,470.6 L366.3,470.2 L367.6,471.3 L368.9,473.2 L370.1,475.5 L371.2,477.7 L372.1,480.2 L373.2,483.8 L374.7,489.1 L376.9,497.7 L379.7,508.6 L382.4,519.4 L384.7,527.3 L386.2,531.0 L387.3,532.2 L388.4,532.5 L390.0,533.8 L392.4,536.4 L395.3,539.4 L398.3,542.7 L401.3,546.0 L404.0,549.5 L406.7,553.2 L409.4,556.7 L412.5,559.7 L415.9,561.8 L419.6,563.4 L423.5,564.8 L427.6,566.6 L431.9,569.0 L436.5,571.7 L441.3,574.4 L446.3,576.6 L451.9,578.3 L458.1,579.5 L464.0,580.6 L468.9,581.6 L472.2,582.5 L474.5,583.2 L476.8,583.9 L480.1,584.5 L484.9,585.1 L490.5,585.7 L496.5,586.2 L502.7,586.7 L509.1,587.2 L515.9,587.6 L522.6,588.0 L529.0,588.2 L535.0,588.2 L540.8,588.0 L546.3,587.7 L551.5,587.3 L555.9,586.9 L559.8,586.4 L563.9,585.9 L569.3,585.4 L576.6,585.0 L585.1,584.6 L594.0,584.1 L602.2,583.5 L609.7,582.6 L616.9,581.6 L623.7,580.5 L630.0,579.2 L635.8,577.6 L641.0,575.8 L646.0,574.0 L650.9,572.6 L655.5,571.8 L659.7,571.4 L664.2,571.0 L669.7,570.1 L676.9,568.5 L685.4,566.6 L693.8,564.4 L701.0,562.3 L706.7,560.0 L711.6,557.6 L715.8,555.4 L719.8,553.8 L723.4,553.0 L726.5,552.8 L729.4,552.8 L732.3,552.9 L734.8,553.2 L736.9,553.7 L739.5,554.1 L743.3,553.8 L748.8,552.5 L755.4,550.6 L762.7,548.5 L769.9,546.6 L777.5,545.1 L785.5,543.7 L793.2,542.4 L799.6,541.3 L804.1,540.4 L807.3,539.7 L810.2,539.1 L813.7,538.8 L818.2,538.7 L823.1,538.8 L828.1,539.1 L832.5,539.4 L836.1,539.7 L839.3,540.1 L842.4,540.6 L845.9,541.2 L850.0,542.1 L854.5,543.3 L859.0,544.4 L863.4,545.1 L867.5,545.3 L871.6,545.1 L875.7,544.9 L880.0,545.0 L884.9,545.5 L890.1,546.2 L895.1,546.9 L899.5,547.4 L902.8,547.6 L905.3,547.6 L907.9,547.5 L911.2,547.0 L915.5,546.1 L920.4,544.9 L925.7,543.5 L931.4,542.4 L937.7,541.6 L944.4,541.0 L951.3,540.4 L957.7,539.6 L963.5,538.6 L969.0,537.5 L974.3,536.4 L979.5,535.3 L984.7,534.2 L989.8,533.1 L994.7,532.1 L999.4,531.0 L1003.7,529.9 L1007.7,528.8 L1011.6,527.8 L1015.5,526.8 L1019.7,525.9 L1024.0,525.2 L1028.0,524.4 L1031.5,523.6 L1034.2,522.6 L1036.3,521.6 L1038.2,520.6 L1040.4,519.8 L1042.9,519.2 L1045.5,518.7 L1048.2,518.3 L1050.8,517.8 L1053.3,517.0 L1055.8,516.1 L1058.3,515.4 L1060.6,515.2 L1062.9,515.8 L1065.3,517.1 L1067.4,518.3 L1069.0,518.8 L1070.0,518.5 L1070.5,517.7 L1070.9,516.5 L1071.4,515.0 L1072.2,512.9 L1073.0,510.3 L1073.9,507.6 L1074.6,505.2 L1075.2,503.2 L1075.7,501.3 L1076.1,499.6 L1076.6,497.9 L1077.1,496.1 L1077.7,494.4 L1078.2,492.8 L1078.7,491.6 L1079.1,490.8 L1079.4,490.3 L1079.7,490.1 L1080.0,490.3 L1080.4,491.0 L1080.9,492.1 L1081.4,493.5 L1081.8,494.8 L1082.2,496.1 L1082.5,497.4 L1082.8,498.9 L1083.1,500.5 L1083.4,502.3 L1083.7,504.3 L1083.9,506.5 L1084.2,508.8 L1084.5,511.5 L1084.7,514.6 L1085.0,517.5 L1085.3,520.0 L1085.6,521.3 L1086.0,521.7 L1086.4,522.8 L1086.7,525.7 L1087.0,530.4 L1087.2,536.3 L1087.4,544.2 L1087.8,554.8 L1088.3,569.4 L1089.0,587.2 L1089.7,606.1 L1090.3,624.0 L1090.8,642.1 L1091.4,660.8 L1091.8,677.4 L1092.1,689.0 L1092,689.5 L1154,689.5" stroke="#3cd83c"/>
<path d="M121.8,689.3 L123.5,684.1 L125.9,676.7 L128.6,668.1 L131.2,659.6 L133.6,650.9 L135.9,641.7 L138.3,632.5 L140.5,623.8 L142.6,615.8 L144.5,608.1 L146.4,600.8 L148.3,594.1 L150.2,587.7 L152.1,581.6 L154.0,576.4 L156.1,572.3 L158.3,569.8 L160.7,568.6 L163.1,568.1 L165.5,567.6 L167.9,567.2 L170.2,567.3 L172.6,567.3 L174.9,566.7 L177.1,565.6 L179.2,564.3 L181.5,562.4 L184.2,559.8 L187.5,556.2 L191.3,551.8 L195.2,547.1 L198.9,542.7 L202.4,538.7 L205.9,534.8 L209.3,531.0 L212.3,527.6 L214.9,525.0 L217.2,522.9 L219.4,520.4 L221.6,516.6 L224.0,510.3 L226.4,502.5 L228.8,494.6 L231.0,488.6 L233.0,484.6 L235.0,481.8 L236.8,480.2 L238.8,480.0 L240.8,481.4 L242.9,484.2 L245.0,488.1 L247.3,492.8 L249.8,498.5 L252.4,505.2 L255.2,512.6 L258.2,520.1 L261.7,528.3 L265.5,537.1 L269.3,545.6 L272.8,552.8 L275.8,558.1 L278.5,562.1 L281.1,565.6 L283.7,569.2 L286.3,573.2 L288.9,577.2 L291.3,580.9 L293.7,583.8 L295.9,585.7 L298.0,586.9 L300.0,587.6 L301.9,588.3 L303.8,588.9 L305.7,589.3 L307.5,589.5 L309.2,589.6 L310.7,589.6 L312.0,589.5 L313.2,589.2 L314.6,588.3 L316.0,586.9 L317.5,585.0 L319.1,582.8 L321.0,580.1 L323.3,576.9 L325.9,573.1 L328.5,569.3 L331.0,565.6 L333.2,562.7 L335.2,560.1 L337.2,557.1 L339.2,552.8 L341.2,546.9 L343.2,539.8 L345.3,532.0 L347.4,523.7 L349.6,514.2 L351.9,503.7 L354.3,493.6 L356.5,485.5 L358.7,479.7 L360.8,475.4 L362.9,472.4 L364.7,470.6 L366.3,470.2 L367.6,471.3 L368.9,473.2 L370.1,475.5 L371.2,477.7 L372.1,480.2 L373.2,483.8 L374.7,489.1 L376.9,497.7 L379.7,508.6 L382.4,519.4 L384.7,527.3 L386.2,531.0 L387.3,532.2 L388.4,532.5 L390.0,533.8 L392.4,536.4 L395.3,539.4 L398.3,542.7 L401.3,546.0 L404.0,549.5 L406.7,553.2 L409.4,556.7 L412.5,559.7 L415.9,561.8 L419.6,563.4 L423.5,564.8 L427.6,566.6 L431.9,569.0 L436.5,571.7 L441.3,574.4 L446.3,576.6 L451.9,578.3 L458.1,579.5 L464.0,580.6 L468.9,581.6 L472.2,582.5 L474.5,583.2 L476.8,583.9 L480.1,584.5 L484.9,585.1 L490.5,585.7 L496.5,586.2 L502.7,586.7 L509.1,587.1 L515.9,587.5 L522.6,587.9 L529.0,588.2 L535.0,588.6 L540.8,589.0 L546.3,589.3 L551.5,589.2 L556.2,588.6 L560.6,587.6 L564.8,586.6 L569.3,586.0 L574.2,585.8 L579.4,586.0 L584.5,586.3 L589.0,586.7 L592.8,587.4 L596.0,588.3 L599.1,589.1 L602.2,589.7 L605.5,589.9 L608.7,589.9 L612.0,589.6 L615.4,589.2 L618.8,588.5 L622.2,587.4 L625.9,586.4 L630.0,585.4 L634.5,584.6 L639.2,584.0 L644.6,583.3 L650.9,582.6 L659.0,581.8 L668.4,581.0 L677.7,580.2 L685.3,579.5 L690.5,578.9 L694.1,578.5 L697.3,577.9 L701.0,577.0 L705.7,575.6 L710.8,573.8 L715.7,572.0 L719.8,570.7 L722.7,569.9 L724.8,569.4 L726.7,569.3 L729.2,569.5 L732.3,570.3 L735.8,571.6 L739.4,573.0 L743.3,573.8 L746.8,574.0 L750.2,573.8 L754.5,573.3 L760.5,572.6 L768.7,571.7 L778.7,570.6 L789.6,569.2 L801.0,567.6 L813.6,565.6 L827.5,563.1 L840.8,560.7 L851.7,558.8 L859.4,557.5 L864.9,556.6 L869.2,555.8 L873.2,554.9 L876.6,553.8 L879.2,552.6 L881.7,551.5 L884.9,550.6 L889.1,550.2 L893.7,550.2 L898.8,550.0 L904.4,549.4 L910.6,548.0 L917.5,546.1 L924.5,544.2 L931.4,542.4 L938.1,540.9 L944.9,539.6 L951.5,538.4 L957.7,537.2 L963.5,536.1 L969.0,535.2 L974.3,534.2 L979.5,533.3 L984.7,532.4 L989.8,531.6 L994.7,530.7 L999.4,529.7 L1003.7,528.5 L1007.7,527.3 L1011.6,526.0 L1015.5,524.9 L1019.7,524.0 L1024.0,523.2 L1028.0,522.6 L1031.5,521.9 L1034.2,521.3 L1036.3,520.6 L1038.2,520.1 L1040.4,519.5 L1042.9,518.9 L1045.5,518.4 L1048.2,517.9 L1050.8,517.3 L1053.3,516.5 L1055.8,515.7 L1058.3,515.0 L1060.6,514.8 L1062.9,515.5 L1065.3,516.9 L1067.4,518.2 L1069.0,518.8 L1070.0,518.5 L1070.5,517.8 L1070.9,516.6 L1071.4,515.0 L1072.2,512.9 L1073.0,510.3 L1073.9,507.6 L1074.6,505.2 L1075.2,503.2 L1075.7,501.3 L1076.1,499.6 L1076.6,497.9 L1077.1,496.1 L1077.7,494.4 L1078.2,492.8 L1078.7,491.6 L1079.1,490.8 L1079.4,490.3 L1079.7,490.1 L1080.0,490.3 L1080.4,491.0 L1080.9,492.1 L1081.4,493.5 L1081.8,494.8 L1082.2,496.1 L1082.5,497.4 L1082.8,498.9 L1083.1,500.5 L1083.4,502.3 L1083.7,504.3 L1083.9,506.5 L1084.2,508.8 L1084.5,511.5 L1084.7,514.6 L1085.0,517.5 L1085.3,520.0 L1085.6,521.3 L1086.0,521.7 L1086.4,522.8 L1086.7,525.7 L1087.0,530.4 L1087.2,536.3 L1087.4,544.2 L1087.8,554.8 L1088.3,569.4 L1089.0,587.2 L1089.7,606.1 L1090.3,624.0 L1090.8,642.1 L1091.4,660.8 L1091.8,677.4 L1092.1,689.0" stroke="#000" stroke-dasharray="1.2,3.2" stroke-width="1"/>
</g>
<rect x="140" y="706" width="1" height="3" fill="#000"/>
<rect x="198" y="706" width="1" height="3" fill="#000"/>
<rect x="240" y="706" width="1" height="3" fill="#000"/>
<rect x="272" y="706" width="1" height="3" fill="#000"/>
<rect x="298" y="706" width="1" height="3" fill="#000"/>
<rect x="320" y="706" width="1" height="3" fill="#000"/>
<rect x="339" y="706" width="1" height="3" fill="#000"/>
<rect x="356" y="706" width="1" height="3" fill="#000"/>
<rect x="371" y="706" width="1" height="3" fill="#000"/>
<rect x="470" y="706" width="1" height="3" fill="#000"/>
<rect x="528" y="706" width="1" height="3" fill="#000"/>
<rect x="569" y="706" width="1" height="3" fill="#000"/>
<rect x="601" y="706" width="1" height="3" fill="#000"/>
<rect x="628" y="706" width="1" height="3" fill="#000"/>
<rect x="650" y="706" width="1" height="3" fill="#000"/>
<rect x="669" y="706" width="1" height="3" fill="#000"/>
<rect x="686" y="706" width="1" height="3" fill="#000"/>
<rect x="701" y="706" width="1" height="3" fill="#000"/>
<rect x="800" y="706" width="1" height="3" fill="#000"/>
<rect x="858" y="706" width="1" height="3" fill="#000"/>
<rect x="899" y="706" width="1" height="3" fill="#000"/>
<rect x="931" y="706" width="1" height="3" fill="#000"/>
<rect x="957" y="706" width="1" height="3" fill="#000"/>
<rect x="979" y="706" width="1" height="3" fill="#000"/>
<rect x="999" y="706" width="1" height="3" fill="#000"/>
<rect x="1015" y="706" width="1" height="3" fill="#000"/>
<rect x="1031" y="706" width="1" height="3" fill="#000"/>
<rect x="1130" y="706" width="1" height="3" fill="#000"/>
<text x="140.5" y="721" text-anchor="middle">20</text>
<text x="198.5" y="721" text-anchor="middle">30</text>
<text x="240.5" y="721" text-anchor="middle">40</text>
<text x="298.5" y="721" text-anchor="middle">60</text>
<text x="339.5" y="721" text-anchor="middle">80</text>
<text x="371.5" y="721" text-anchor="middle">100</text>
<text x="470.5" y="721" text-anchor="middle">200</text>
<text x="528.5" y="721" text-anchor="middle">300</text>
<text x="569.5" y="721" text-anchor="middle">400</text>
<text x="628.5" y="721" text-anchor="middle">600</text>
<text x="669.5" y="721" text-anchor="middle">800</text>
<text x="701.5" y="721" text-anchor="middle">1.0k</text>
<text x="800.5" y="721" text-anchor="middle">2.0k</text>
<text x="858.5" y="721" text-anchor="middle">3.0k</text>
<text x="899.5" y="721" text-anchor="middle">4.0k</text>
<text x="957.5" y="721" text-anchor="middle">6.0k</text>
<text x="999.5" y="721" text-anchor="middle">8.0k</text>
<text x="1031.5" y="721" text-anchor="middle">10.0k</text>
<text x="1130.5" y="721" text-anchor="middle">20.0k</text>
<text x="612" y="161" text-anchor="middle" letter-spacing="0.35">Left Channel</text>
<text transform="translate(25.5,432) rotate(-90)" text-anchor="middle" font-size="13" letter-spacing="0.7">SPL (dBrms)</text>
</svg>

<div class="t" style="left:1183px;top:154px;font-size:11.6px;letter-spacing:0;text-decoration:underline">Overlays</div>
<div class="t" style="left:1164px;top:185px;font-size:12px;transform-origin:0 0;transform:rotate(-90deg)">Set</div>
<div class="t" style="left:1179px;top:185px;font-size:12px;letter-spacing:-0.6px;transform-origin:0 0;transform:rotate(-90deg)">On</div>
<div class="a" style="left:1162px;top:188px;width:14px;height:14px;background:#ece9d8;border-left:1px solid #fff;border-top:1px solid #fff;border-right:2px solid #8a8a7a;border-bottom:2px solid #8a8a7a"></div>
<div class="t" style="left:1166px;top:190px;font-size:11.5px">1</div>
<div class="a" style="left:1179px;top:189px;width:13px;height:13px;background:#fff;border-left:2px solid #8a8a80;border-top:2px solid #8a8a80"></div>
<svg class="a" style="left:1182px;top:192px" width="8" height="8" viewBox="0 0 8 8"><path d="M0.6,3.6L2.8,6.2L7.6,0.8" fill="none" stroke="#000" stroke-width="2"/></svg>
<div class="t" style="left:1195px;top:190px;font-size:11px;letter-spacing:0;color:#000">Overlay 1</div>
<div class="a" style="left:1162px;top:204px;width:14px;height:14px;background:#ece9d8;border-left:1px solid #fff;border-top:1px solid #fff;border-right:2px solid #8a8a7a;border-bottom:2px solid #8a8a7a"></div>
<div class="t" style="left:1166px;top:206px;font-size:11.5px">2</div>
<div class="a" style="left:1179px;top:205px;width:13px;height:13px;background:#fff;border-left:2px solid #8a8a80;border-top:2px solid #8a8a80"></div>
<svg class="a" style="left:1182px;top:208px" width="8" height="8" viewBox="0 0 8 8"><path d="M0.6,3.6L2.8,6.2L7.6,0.8" fill="none" stroke="#000" stroke-width="2"/></svg>
<div class="t" style="left:1195px;top:206px;font-size:11px;letter-spacing:0;color:#dc1e1e">Overlay 2</div>
<div class="a" style="left:1162px;top:220px;width:14px;height:14px;background:#ece9d8;border-left:1px solid #fff;border-top:1px solid #fff;border-right:2px solid #8a8a7a;border-bottom:2px solid #8a8a7a"></div>
<div class="t" style="left:1166px;top:222px;font-size:11.5px">3</div>
<div class="a" style="left:1179px;top:221px;width:13px;height:13px;background:#fff;border-left:2px solid #8a8a80;border-top:2px solid #8a8a80"></div>
<svg class="a" style="left:1182px;top:224px" width="8" height="8" viewBox="0 0 8 8"><path d="M0.6,3.6L2.8,6.2L7.6,0.8" fill="none" stroke="#000" stroke-width="2"/></svg>
<div class="t" style="left:1195px;top:222px;font-size:11px;letter-spacing:0;color:#1a1ac0">Overlay 3</div>
<div class="a" style="left:1162px;top:236px;width:14px;height:14px;background:#ece9d8;border-left:1px solid #fff;border-top:1px solid #fff;border-right:2px solid #8a8a7a;border-bottom:2px solid #8a8a7a"></div>
<div class="t" style="left:1166px;top:238px;font-size:11.5px">4</div>
<div class="a" style="left:1179px;top:237px;width:13px;height:13px;background:#fff;border-left:2px solid #8a8a80;border-top:2px solid #8a8a80"></div>
<svg class="a" style="left:1182px;top:240px" width="8" height="8" viewBox="0 0 8 8"><path d="M0.6,3.6L2.8,6.2L7.6,0.8" fill="none" stroke="#000" stroke-width="2"/></svg>
<div class="t" style="left:1195px;top:238px;font-size:11px;letter-spacing:0;color:#22dc22">Overlay 4</div>
<div class="a" style="left:1159px;top:253px;width:64px;height:18px;background:#ece9d8;border-left:1px solid #fff;border-top:1px solid #fff;border-right:2px solid #8a8a7a;border-bottom:2px solid #8a8a7a"></div>
<div class="t" style="left:1165px;top:257px;font-size:12px">Options...</div>

<div class="a" style="left:1256px;top:86px;width:17px;height:636px;background:linear-gradient(to right,#eeede5,#fcfcfa 60%,#fbfbf8)"></div>
<svg class="a" style="left:1257px;top:87px" width="16" height="17" viewBox="0 0 16 17"><defs><linearGradient id="g1257_87" x1="0" y1="0" x2="1" y2="1"><stop offset="0" stop-color="#dae4fe"/><stop offset="1" stop-color="#b4c8f6"/></linearGradient></defs><rect x="0.5" y="0.5" width="15" height="16" rx="2" fill="url(#g1257_87)" stroke="#fff"/><path d="M3.5,11.0 L8.0,6.5 L12.5,11.0" fill="none" stroke="#4d6185" stroke-width="2.2"/></svg>
<svg class="a" style="left:1257px;top:705px" width="16" height="17" viewBox="0 0 16 17"><defs><linearGradient id="g1257_705" x1="0" y1="0" x2="1" y2="1"><stop offset="0" stop-color="#dae4fe"/><stop offset="1" stop-color="#b4c8f6"/></linearGradient></defs><rect x="0.5" y="0.5" width="15" height="16" rx="2" fill="url(#g1257_705)" stroke="#fff"/><path d="M3.5,6.5 L8.0,11.0 L12.5,6.5" fill="none" stroke="#4d6185" stroke-width="2.2"/></svg>
<div class="a" style="left:1257px;top:104px;width:16px;height:579px;border:1px solid #fff;border-radius:3px;background:linear-gradient(to right,#c9d6fd,#c6d6fb 50%,#b8cdf8)"></div>
<svg class="a" style="left:1261px;top:388px" width="8" height="13"><rect x="0" y="2" width="8" height="1" fill="#8d9ccf"/><rect x="0" y="1" width="7" height="1" fill="#eef4ff"/><rect x="0" y="4" width="8" height="1" fill="#8d9ccf"/><rect x="0" y="3" width="7" height="1" fill="#eef4ff"/><rect x="0" y="6" width="8" height="1" fill="#8d9ccf"/><rect x="0" y="5" width="7" height="1" fill="#eef4ff"/><rect x="0" y="8" width="8" height="1" fill="#8d9ccf"/><rect x="0" y="7" width="7" height="1" fill="#eef4ff"/></svg>
<div class="a" style="left:5px;top:722px;width:1251px;height:17px;background:linear-gradient(to bottom,#eeede5,#fcfcfa 60%,#fbfbf8)"></div>
<svg class="a" style="left:5px;top:723px" width="16" height="17" viewBox="0 0 16 17"><defs><linearGradient id="g5_723" x1="0" y1="0" x2="1" y2="1"><stop offset="0" stop-color="#dae4fe"/><stop offset="1" stop-color="#b4c8f6"/></linearGradient></defs><rect x="0.5" y="0.5" width="15" height="16" rx="2" fill="url(#g5_723)" stroke="#fff"/><path d="M10.0,4.0 L5.5,8.5 L10.0,13.0" fill="none" stroke="#4d6185" stroke-width="2.2"/></svg>
<svg class="a" style="left:1239px;top:723px" width="17" height="17" viewBox="0 0 17 17"><defs><linearGradient id="g1239_723" x1="0" y1="0" x2="1" y2="1"><stop offset="0" stop-color="#dae4fe"/><stop offset="1" stop-color="#b4c8f6"/></linearGradient></defs><rect x="0.5" y="0.5" width="16" height="16" rx="2" fill="url(#g1239_723)" stroke="#fff"/><path d="M6.5,4.0 L11.0,8.5 L6.5,13.0" fill="none" stroke="#4d6185" stroke-width="2.2"/></svg>
<div class="a" style="left:22px;top:723px;width:1202px;height:17px;border:1px solid #fff;border-radius:3px;background:linear-gradient(to bottom,#cad7fd,#c4d4fb 50%,#b3cdf6)"></div>
<svg class="a" style="left:619px;top:728px" width="9" height="8"><rect x="1" y="0" width="1" height="8" fill="#8d9ccf"/><rect x="0" y="0" width="1" height="7" fill="#eef4ff"/><rect x="3" y="0" width="1" height="8" fill="#8d9ccf"/><rect x="2" y="0" width="1" height="7" fill="#eef4ff"/><rect x="5" y="0" width="1" height="8" fill="#8d9ccf"/><rect x="4" y="0" width="1" height="7" fill="#eef4ff"/><rect x="7" y="0" width="1" height="8" fill="#8d9ccf"/><rect x="6" y="0" width="1" height="7" fill="#eef4ff"/></svg>
<div class="a" style="left:5px;top:739px;width:1251px;height:1px;background:#a9b4c6"></div>
<div class="a" style="left:1256px;top:722px;width:17px;height:17px;background:#ece9d8"></div>
<div class="a" style="left:1256px;top:739px;width:17px;height:1px;background:#000"></div>
<div class="a" style="left:86px;top:690px;width:1069px;height:16px;background-color:#fbfaf6;background-image:linear-gradient(45deg,#e6e3d6 25%,transparent 25%,transparent 75%,#e6e3d6 75%),linear-gradient(45deg,#e6e3d6 25%,transparent 25%,transparent 75%,#e6e3d6 75%);background-size:2px 2px;background-position:0 0,1px 1px"></div>
<div class="a" style="left:67px;top:690px;width:2px;height:18px;background:#868686"></div>
<div class="a" style="left:69px;top:690px;width:17px;height:16px;background:#f2f0e6;border-right:2px solid #7c7c74;border-bottom:2px solid #7c7c74;border-left:1px solid #fff;border-top:1px solid #fff"></div><svg class="a" style="left:74px;top:694px" width="5" height="8"><path d="M0,4L4.5,0V8Z" fill="#000"/></svg>
<div class="a" style="left:1121px;top:690px;width:17px;height:16px;background:#f2f0e6;border-right:2px solid #7c7c74;border-bottom:2px solid #7c7c74;border-left:1px solid #fff;border-top:1px solid #fff"></div>
<div class="a" style="left:1138px;top:690px;width:17px;height:16px;background:#f2f0e6;border-right:2px solid #7c7c74;border-bottom:2px solid #7c7c74;border-left:1px solid #fff;border-top:1px solid #fff"></div><svg class="a" style="left:1144px;top:694px" width="5" height="8"><path d="M4.5,4L0,0V8Z" fill="#000"/></svg>

<!-- status bar -->
<div class="a" style="left:5px;top:740px;width:1268px;height:1px;background:#fff"></div>
<div class="pane" style="left:8px;width:119px"></div>
<div class="pane" style="left:128px;width:102px"></div>
<div class="pane" style="left:231px;width:72px"></div>
<div class="pane" style="left:304px;width:53px"></div>
<div class="pane" style="left:357px;width:63px"></div>
<div class="pane" style="left:420px;width:103px"></div>
<div class="pane" style="left:523px;width:73px"></div>
<div class="t" style="left:12px;top:746px">Stopped</div>
<div class="t" style="left:132px;top:746px">Real Time</div>
<div class="t" style="left:235px;top:746px;letter-spacing:0.25px">48000 Hz</div>
<div class="t" style="left:308px;top:746px;letter-spacing:0.3px">16 Bit</div>
<div class="t" style="left:361px;top:746px;letter-spacing:0.15px">Mono</div>
<div class="t" style="left:424px;top:746px;letter-spacing:0.15px">FFT: 65536 pts</div>
<div class="t" style="left:527px;top:746px;letter-spacing:0.45px">Hanning</div>

</body></html>
